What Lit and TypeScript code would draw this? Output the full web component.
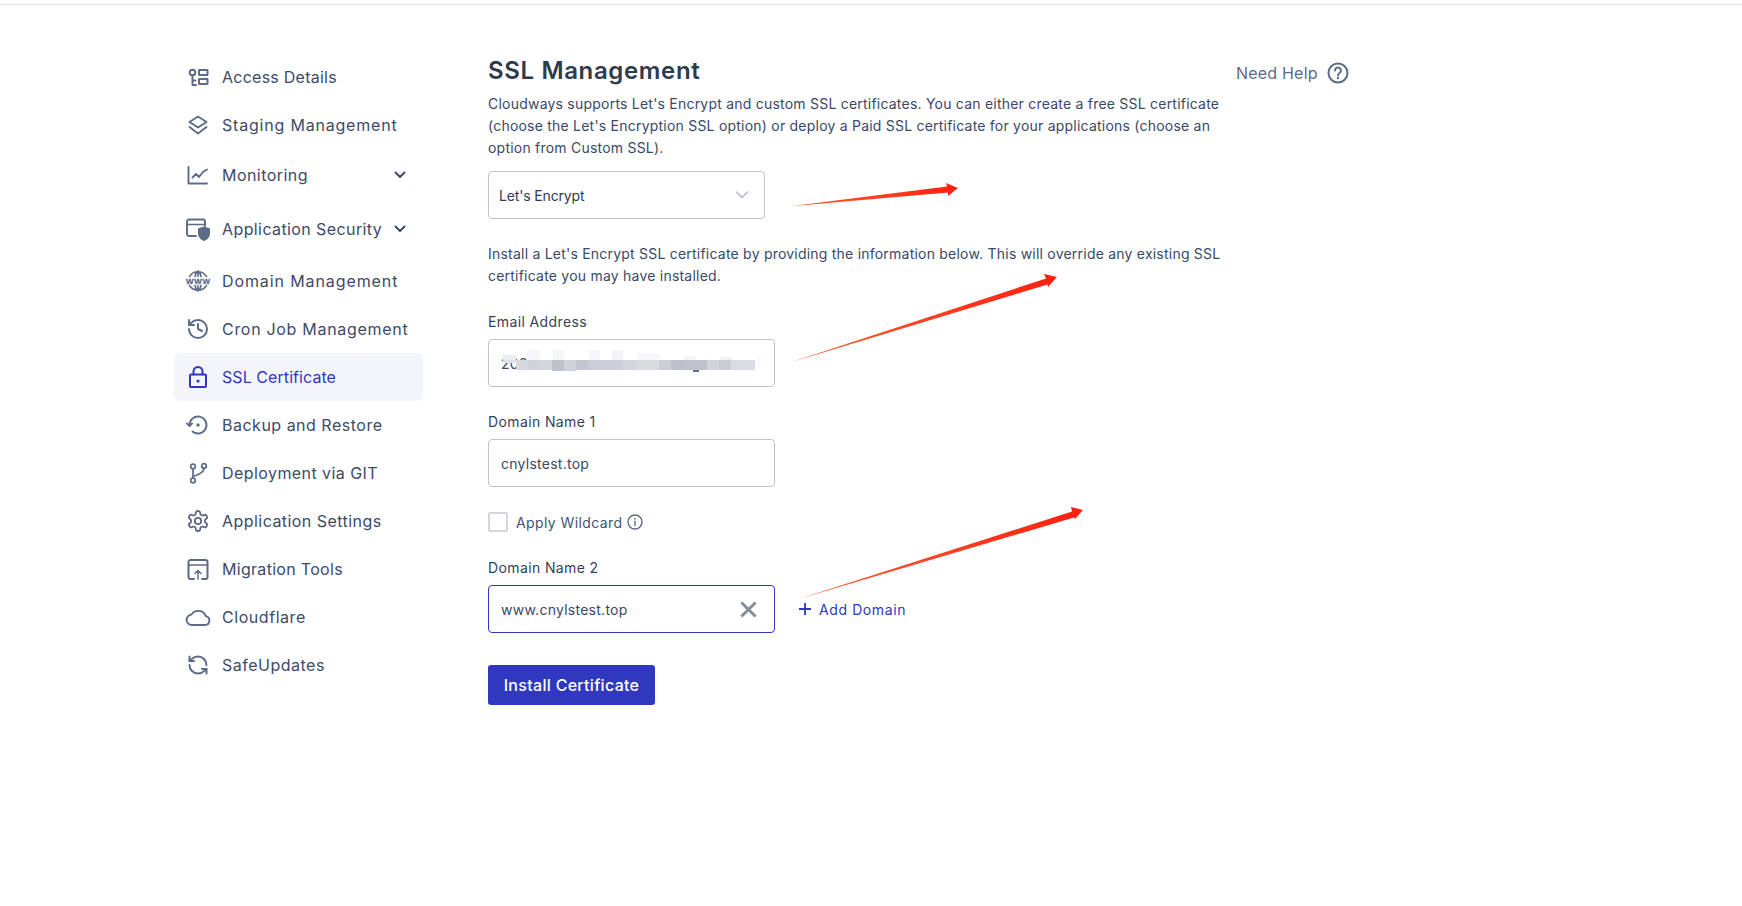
import { LitElement, html, css, svg } from "lit";
import { customElement } from "lit/decorators.js";

const stroke = (inner: unknown) => html`<svg class="ico" viewBox="0 0 24 24" fill="none" stroke="currentColor" stroke-width="2" stroke-linecap="round" stroke-linejoin="round">${inner}</svg>`;

const icons: Record<string, unknown> = {
  access: stroke(svg`<circle cx="6.5" cy="7.5" r="2.8"/><path d="M6.5 10.3V20H10M6.5 15.5H9.5"/><rect x="13" y="5" width="8.5" height="5" rx=".3" stroke-linejoin="miter"/><rect x="13" y="14" width="8.5" height="5" rx=".3" stroke-linejoin="miter"/>`),
  layers: stroke(svg`<path d="M12 3.5L20.5 9L12 14.5L3.5 9Z" stroke-width="1.9"/><path d="M3.5 14L12 20.5L20.5 14" stroke-width="1.9"/>`),
  chart: stroke(svg`<path d="M2.5 4V20.5H21" stroke-width="1.9"/><path d="M6.5 14.5L10 11L13 14L17 9L21 6.5" stroke-width="1.9"/>`),
  security: stroke(svg`<path d="M10 19H3a2 2 0 0 1-2-2V4.5a2 2 0 0 1 2-2h14a2 2 0 0 1 2 2V9" stroke-width="1.9"/><path d="M1 7.5H19" stroke-width="1.6"/><path d="M18 9.5L24 11.5V16.5C24 20 21.5 22.5 18 24C14.5 22.5 12 20 12 16.5V11.5Z" fill="currentColor" stroke="none"/>`),
  www: stroke(svg`<path d="M3.5 7.5A10 10 0 0 1 20.5 7.5M3.5 16.5A10 10 0 0 0 20.5 16.5M9 7.5C9.5 4.5 10.5 3 12 2C13.5 3 14.5 4.5 15 7.5M9 16.5C9.5 19.5 10.5 21 12 22C13.5 21 14.5 19.5 15 16.5M12 2V7.5M12 16.5V22" stroke-width="1.6"/><text x="12" y="15" text-anchor="middle" font-family="Liberation Sans, sans-serif" font-size="8" font-weight="700" fill="currentColor" stroke="currentColor" stroke-width=".3" textLength="24">WWW</text>`),
  history: stroke(svg`<path d="M3 12a9 9 0 1 0 9-9 9.75 9.75 0 0 0-6.74 2.74L3 8"/><path d="M3 3v5h5"/><path d="M12 7v5l4 2"/>`),
  lock: stroke(svg`<rect x="4" y="9.5" width="16" height="12.5" rx="1"/><path d="M7.5 9.5V6.5a4.5 4.5 0 0 1 9 0V9.5"/><circle cx="12" cy="16" r="1.6" fill="currentColor" stroke="none"/>`),
  backup: stroke(svg`<path d="M3.5 12.5A8.5 8.5 0 1 1 6.5 18.5" stroke-width="1.9"/><path d="M1 10.5L3.5 13L6 10.5" stroke-width="1.9"/><circle cx="12" cy="12" r="1.7" fill="currentColor" stroke="none"/>`),
  git: stroke(svg`<circle cx="7" cy="5.5" r="2.3" stroke-width="1.7"/><circle cx="18" cy="5" r="2.3" stroke-width="1.7"/><circle cx="7" cy="19.5" r="2.3" stroke-width="1.7"/><path d="M7 7.8V17.2M18 7.3C18 11.5 14 13.5 7 15.5" stroke-width="1.7"/>`),
  gear: stroke(svg`<path stroke-width="1.8" d="M12.22 2h-.44a2 2 0 0 0-2 2v.18a2 2 0 0 1-1 1.73l-.43.25a2 2 0 0 1-2 0l-.15-.08a2 2 0 0 0-2.73.73l-.22.38a2 2 0 0 0 .73 2.73l.15.1a2 2 0 0 1 1 1.72v.51a2 2 0 0 1-1 1.74l-.15.09a2 2 0 0 0-.73 2.73l.22.38a2 2 0 0 0 2.73.73l.15-.08a2 2 0 0 1 2 0l.43.25a2 2 0 0 1 1 1.73V20a2 2 0 0 0 2 2h.44a2 2 0 0 0 2-2v-.18a2 2 0 0 1 1-1.73l.43-.25a2 2 0 0 1 2 0l.15.08a2 2 0 0 0 2.73-.73l.22-.39a2 2 0 0 0-.73-2.73l-.15-.08a2 2 0 0 1-1-1.74v-.5a2 2 0 0 1 1-1.74l.15-.09a2 2 0 0 0 .73-2.73l-.22-.38a2 2 0 0 0-2.73-.73l-.15.08a2 2 0 0 1-2 0l-.43-.25a2 2 0 0 1-1-1.73V4a2 2 0 0 0-2-2z"/><circle cx="12" cy="12" r="3.2" stroke-width="1.8"/>`),
  migrate: stroke(svg`<path d="M8 22H4.5a2 2 0 0 1-2-2V5a2 2 0 0 1 2-2h15a2 2 0 0 1 2 2v15a2 2 0 0 1-2 2H16"/><path d="M2.5 8H21.5" stroke-width="1.5"/><path d="M12 22V13.5M9 16.5L12 13.5L15 16.5" stroke-width="1.5"/>`),
  cloud: stroke(svg`<path d="M6 20H19a4.5 4.5 0 0 0 .8-8.9A8 8 0 0 0 5.5 9.6A5.2 5.2 0 0 0 6 20Z" stroke-width="1.9"/>`),
  refresh: stroke(svg`<path d="M20.5 12a8.5 8.5 0 0 0-8.5-8.5 9 9 0 0 0-6.4 2.6L3.5 8"/><path d="M3.5 3.5v4.5h4.5"/><path d="M3.5 12a8.5 8.5 0 0 0 8.5 8.5 9 9 0 0 0 6.4-2.6L20.5 16"/><path d="M16 16h4.5v4.5"/>`),
};

const nav = [
  { label: "Access Details", icon: "access", ls: 0.25 },
  { label: "Staging Management", icon: "layers", ls: 0.8 },
  { label: "Monitoring", icon: "chart", cls: "h52", more: true, ls: 0.45 },
  { label: "Application Security", icon: "security", cls: "h56", more: true, ls: 0.4 },
  { label: "Domain Management", icon: "www", ls: 0.9 },
  { label: "Cron Job Management", icon: "history", ls: 0.7 },
  { label: "SSL Certificate", icon: "lock", cls: "active", ls: 0.07 },
  { label: "Backup and Restore", icon: "backup", ls: 0.5 },
  { label: "Deployment via GIT", icon: "git", ls: 0.43 },
  { label: "Application Settings", icon: "gear", ls: 0.45 },
  { label: "Migration Tools", icon: "migrate", ls: 0.3 },
  { label: "Cloudflare", icon: "cloud", ls: 0.55 },
  { label: "SafeUpdates", icon: "refresh", ls: 0.5 },
];

/* blurred e-mail: [left, top, width, height, colour] inside the input's padding box */
const blur: [number, number, number, number, string][] = [
  [14, 15, 13, 5, "#eceef3"], [38, 10, 13, 10, "#f5f5fb"], [64, 10, 11, 10, "#f5f6f9"], [100, 10, 11, 10, "#f5f6f9"], [123, 10, 11, 10, "#f4f4f9"], [148, 13, 23, 7, "#f7f7fa"], [195, 16, 11, 4, "#f3f4f8"], [231, 17, 12, 3, "#f1f1f8"], [268, 17, 3, 11, "#f8f8fa"],
  [14, 20, 12, 3, "#dfe2e8"], [27, 20, 12, 10, "#d5d8de"], [39, 20, 12, 10, "#d0d3da"], [51, 20, 12, 10, "#d4d6dd"], [63, 20, 12, 11, "#bcc2cc"], [75, 20, 12, 11, "#d0d3dc"],
  [87, 20, 12, 10, "#c3c6d0"], [99, 20, 35, 10, "#cccfd7"], [134, 20, 13, 10, "#d3d5dc"], [147, 20, 23, 10, "#d9dbe0"], [170, 20, 12, 10, "#ccced6"], [182, 20, 12, 10, "#bec1cc"], [194, 20, 24, 10, "#bdc2cd"], [218, 20, 12, 10, "#d0d3da"], [230, 20, 12, 10, "#c9ccd3"], [242, 20, 24, 10, "#d9dce2"],
  [204, 30, 6, 2, "#68718a"],
];

@customElement("app-root")
export class AppRoot extends LitElement {
  static styles = css`
    :host { display: block; height: 906px; position: relative; background: #fff; overflow: hidden;
      font-family: Inter, "Noto Sans", sans-serif; color: #3a4867; font-size: 14px; }
    * { box-sizing: border-box; }
    .topline { height: 1px; margin-top: 4px; background: #e3e4ec; }
    .page { display: flex; align-items: flex-start; padding: 47px 0 0 174px; }
    .side { width: 249px; margin-top: 1px; margin-right: 65px; flex: none; }
    .item { height: 48px; display: flex; align-items: center; gap: 12px; padding: 0 17px 0 12px; border-radius: 6px; font-size: 16px; color: #3d4a68; white-space: nowrap; }
    .item.h52 { height: 52px; }
    .item.h56 { height: 56px; }
    .item.active { background: #f4f5fb; color: #2f38be; }
    .ico { width: 24px; height: 24px; color: #5d6b87; flex: none; overflow: visible; }
    .active .ico { color: #2f38be; }
    .chev { width: 12px; height: 8px; margin-left: auto; flex: none; color: #3d4a68; }
    .main { width: 735px; margin-right: 13px; flex: none; }
    h1 { margin: 0 0 5px; font-size: 24px; line-height: 38px; height: 36px; font-weight: 600; letter-spacing: .64px; color: #2e3a4e; }
    p { margin: 0; line-height: 22px; font-size: 14px; letter-spacing: .22px; color: #3a4867; }
    .select { width: 277px; height: 48px; margin: 12px 0 24px; border: 1px solid #bfc3d1; border-radius: 4px; display: flex; align-items: center; justify-content: space-between; padding: 0 15px 0 10px; color: #2f3a4e; font-size: 14px; letter-spacing: -.15px; }
    .select svg { width: 14px; height: 8px; color: #b4b9c5; }
    label { display: block; line-height: 22px; margin: 24px 0 6px; color: #343f5a; font-size: 14px; letter-spacing: .38px; }
    .input { width: 287px; height: 48px; border: 1px solid #bfc3d1; border-radius: 4px; display: flex; align-items: center; justify-content: space-between; padding: 0 17px 0 12px; color: #3a4867; font-size: 14px; letter-spacing: .26px; position: relative; background: #fff; }
    .input.focus { border-color: #2f38be; }
    .input .x { width: 17px; height: 17px; color: #858b96; }
    .blur { position: absolute; }
    .check { display: flex; align-items: center; margin: 25px 0; height: 20px; color: #46536f; font-size: 14px; letter-spacing: .4px; }
    .box { width: 20px; height: 20px; border: 2px solid #d3d6dd; border-radius: 2px; margin-right: 8px; }
    .check svg { width: 16px; height: 16px; margin-left: 5px; color: #5d6b87; }
    .tight { margin-top: 0; }
    .row { display: flex; align-items: center; }
    .add { margin-left: 24px; display: flex; align-items: center; gap: 8px; color: #2f38be; font-size: 14px; letter-spacing: .6px; }
    .add svg { width: 12px; height: 12px; }
    button { display: block; width: 167px; height: 40px; margin-top: 32px; border: 0; border-radius: 3px; background: #2f38be; color: #fff; font: 500 16px Inter, "Noto Sans", sans-serif; letter-spacing: .3px; padding: 0; }
    .help { display: flex; align-items: center; gap: 9px; height: 24px; margin-top: 9px; font-size: 16px; letter-spacing: .2px; color: #5d6b87; }
    .help svg { width: 22px; height: 22px; }
    .notes { position: absolute; inset: 0; width: 100%; height: 100%; pointer-events: none; }
  `;

  render() {
    return html`
      <div class="topline"></div>
      <div class="page">
        <nav class="side">
          ${nav.map(n => html`<div class="item ${n.cls ?? ""}">${icons[n.icon]}<span style="letter-spacing:${n.ls}px">${n.label}</span>${n.more ? html`<svg class="chev" viewBox="0 0 12 8" fill="none" stroke="currentColor" stroke-width="2" stroke-linecap="round" stroke-linejoin="round"><path d="M1.5 1.5L6 6L10.5 1.5"/></svg>` : ""}</div>`)}
        </nav>
        <section class="main">
          <h1>SSL Management</h1>
          <p>Cloudways supports Let's Encrypt and custom SSL certificates. You can either create a free SSL certificate (choose the Let's Encryption SSL option) or deploy a Paid SSL certificate for your applications (choose an option from Custom SSL).</p>
          <div class="select"><span>Let's Encrypt</span><svg viewBox="0 0 14 8" fill="none" stroke="currentColor" stroke-width="1.6" stroke-linecap="round" stroke-linejoin="round"><path d="M1.5 1L7 6.5L12.5 1"/></svg></div>
          <p>Install a Let's Encrypt SSL certificate by providing the information below. This will override any existing SSL certificate you may have installed.</p>
          <label>Email Address</label>
          <div class="input"><span>202</span>${blur.map(([l, t, w, h, c]) => html`<i class="blur" style="left:${l}px;top:${t}px;width:${w}px;height:${h}px;background:${c}"></i>`)}</div>
          <label>Domain Name 1</label>
          <div class="input"><span>cnylstest.top</span></div>
          <div class="check"><span class="box"></span><span>Apply Wildcard</span><svg viewBox="0 0 16 16" fill="none" stroke="currentColor" stroke-width="1.4"><circle cx="8" cy="8" r="7"/><path d="M8 7.2V11.5" stroke-linecap="round"/><circle cx="8" cy="4.8" r=".9" fill="currentColor" stroke="none"/></svg></div>
          <label class="tight">Domain Name 2</label>
          <div class="row">
            <div class="input focus"><span>www.cnylstest.top</span><svg class="x" viewBox="0 0 18 18" fill="none" stroke="currentColor" stroke-width="3"><path d="M1.5 1.5L16.5 16.5M16.5 1.5L1.5 16.5"/></svg></div>
            <div class="add"><svg viewBox="0 0 12 12" fill="none" stroke="currentColor" stroke-width="1.8"><path d="M6 0V12M0 6H12"/></svg><span>Add Domain</span></div>
          </div>
          <button>Install Certificate</button>
        </section>
        <aside class="help"><span>Need Help</span><svg viewBox="0 0 22 22" fill="none" stroke="currentColor" stroke-width="2"><circle cx="11" cy="11" r="9.5"/><path d="M8 8.5a3 3 0 1 1 4.6 2.5c-1 .6-1.6 1.1-1.6 2.2" stroke-linecap="round"/><circle cx="11" cy="16" r="1.2" fill="currentColor" stroke="none"/></svg></aside>
      </div>
      <svg class="notes" viewBox="0 0 1742 906">
        <defs>
          <linearGradient id="a1" gradientUnits="userSpaceOnUse" x1="788" y1="206" x2="958" y2="188"><stop offset="0" stop-color="#ffc9a8"/><stop offset=".08" stop-color="#ff5a30"/><stop offset="1" stop-color="#ff2010"/></linearGradient>
          <linearGradient id="a2" gradientUnits="userSpaceOnUse" x1="787" y1="363" x2="1057" y2="277"><stop offset="0" stop-color="#ffc9a8"/><stop offset=".06" stop-color="#ff5a30"/><stop offset="1" stop-color="#ff2010"/></linearGradient>
          <linearGradient id="a3" gradientUnits="userSpaceOnUse" x1="797" y1="599" x2="1083" y2="510"><stop offset="0" stop-color="#ffc9a8"/><stop offset=".06" stop-color="#ff5a30"/><stop offset="1" stop-color="#ff2010"/></linearGradient>
        </defs>
        <polygon fill="url(#a1)" points="788,206.5 947,186.5 946,183 958,188 948,196 948,192.5"/>
        <polygon fill="url(#a2)" points="787,363.5 1046,278.5 1044,274 1057,277 1048,287 1047.5,284.5"/>
        <polygon fill="url(#a3)" points="797,599.5 1072,511.5 1071,507 1083,510 1075,519 1074,517.5"/>
      </svg>
    `;
  }
}
